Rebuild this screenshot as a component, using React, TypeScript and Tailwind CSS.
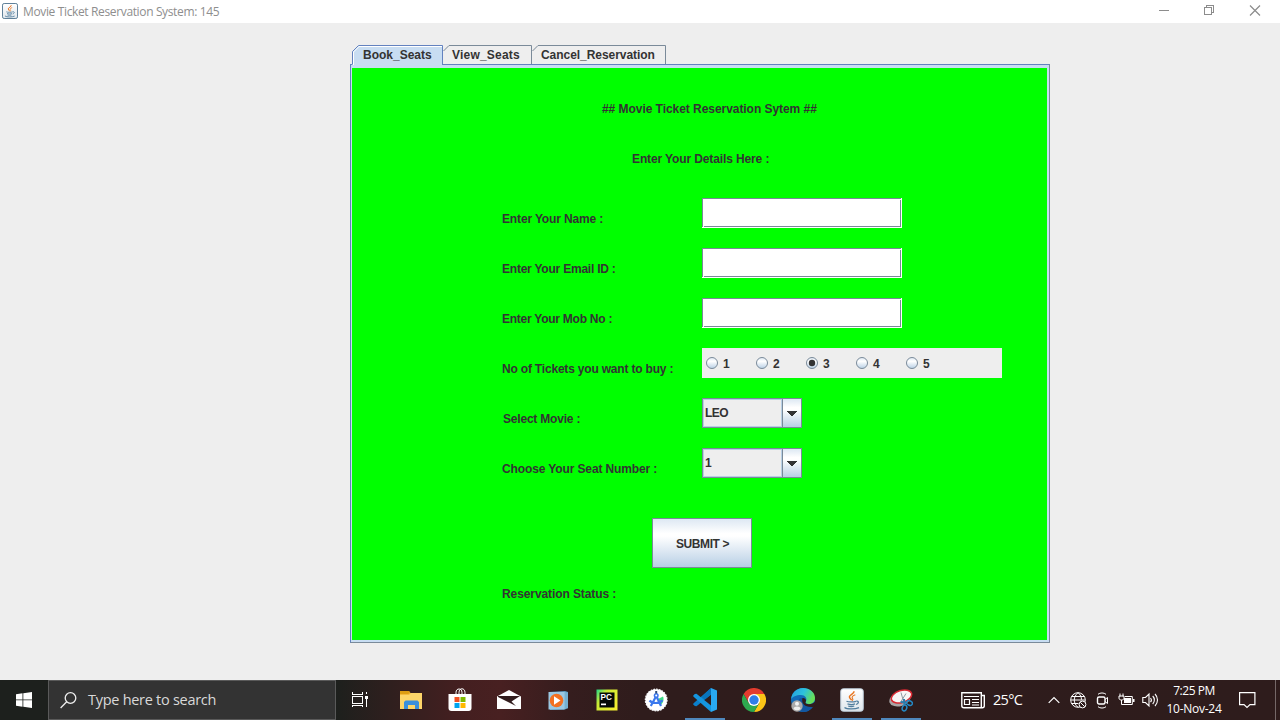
import React from "react";

function JavaIcon({ size }: { size: number }) {
  return (
    <svg width={size} height={size} viewBox="0 0 24 24" fill="none">
      <defs>
        <linearGradient id="javaFace" x1="0" y1="0" x2="0" y2="1">
          <stop offset="0" stopColor="#ffffff" />
          <stop offset="1" stopColor="#dfe6ec" />
        </linearGradient>
      </defs>
      <rect x="0.75" y="0.75" width="22.5" height="22.5" rx="2.5" fill="url(#javaFace)" stroke={size < 20 ? "#5f8099" : "#bccbd8"} strokeWidth={size < 20 ? 1.5 : 1} />
      <path d="M13.8 3.300c.8 2.400-4.400 3.300-4.400 5.500 0 1.700 1.700 2.200 2.200 3.500" stroke="#e8741e" strokeWidth="1.500" />
      <path d="M15.300 6.800c-3 1.200-3.800 2.200-2.800 3.500.7.900.4 1.800-.5 2.500" stroke="#e8741e" strokeWidth="1.100" />
      <path d="M6.500 13.200c1.800 1 7.300.9 9.500.1M7.500 15.800c2.200.8 5.700.8 7.500.1M8.200 18c1.800.6 4.600.5 6 0M16.200 13.200c3-.6 2.900 2.400-.2 3.300M4.500 19.500c2.500 2 11 1.700 14.500.1" stroke="#527e9e" strokeWidth="1.300" />
    </svg>
  );
}

function TitleBar() {
  return (
    <header className="flex h-[23px] w-full items-start bg-white">
      <div className="pl-[2px] pt-[3px]"><JavaIcon size={16} /></div>
      <span className="ml-[5px] mt-[2px] flex-1 whitespace-nowrap font-['Open_Sans','Noto_Sans',sans-serif] text-[12px] leading-[20px] tracking-[-0.36px] text-[#8e8e8e]">Movie Ticket Reservation System: 145</span>
      <svg width="140" height="23" fill="none" stroke="#8c8c8c" shapeRendering="crispEdges">
        <path d="M19 10.500h10" />
        <path d="M66.500 7.500v-2h7v7h-2M64.500 7.500h7v7h-7z" />
        <path d="M110 5.500l10 10M120 5.500l-10 10" shapeRendering="auto" strokeWidth="1.200" />
      </svg>
    </header>
  );
}

function Tab({ label, width, active, text }: { label: string; width: number; active?: boolean; text: string }) {
  const stroke = active ? "#6382bf" : "#7a8a99";
  const bottom = active ? 20 : 19;
  return (
    <div className="relative flex h-5 shrink-0" style={{ width }}>
      <svg className="absolute inset-0" width={width} height="20" fill="none">
        <path d={`M.5 ${bottom}V6.500L6.500.5H${width - 0.5}V${bottom}`} fill={active ? "#c8ddf2" : "#eeeeee"} />
        <path d={active ? `M.5 19V6.500L6.500.5H${width - 0.5}V20` : `M.5 6L6 .5H${width - 0.5}V19`} stroke={stroke} />
        {active ? <path d="M1.500 20V7L7 1.500H90" stroke="#ffffff" /> : null}
      </svg>
      <span className={`relative whitespace-nowrap text-[12px] font-bold leading-[20px] ${text}`}>{label}</span>
    </div>
  );
}

function TextField() {
  return (
    <div className="flex h-[30px] w-[200px] bg-white">
      <svg width="200" height="30" fill="none" stroke="#7a8a99" shapeRendering="crispEdges">
        <path d="M.5 29V.5H199M2 28.500H198.500V2" />
      </svg>
    </div>
  );
}

function Combo({ value, spacing }: { value: string; spacing: string }) {
  return (
    <div className="flex h-[30px] w-[100px] border border-[#7a8a99]">
      <div className="flex w-[79px] border border-[#b8cfe5] bg-[#eeeeee]">
        <span className={`pl-px text-[12px] leading-[26px] ${spacing}`}>{value}</span>
      </div>
      <div className="flex flex-1 items-center justify-center border-l border-[#7a8a99] bg-[linear-gradient(180deg,#dde8f3_0%,#ffffff_30%,#ffffff_38%,#b8cfe5_100%)]">
        <svg width="10" height="5" shapeRendering="crispEdges" className="mt-px">
          <path d="M0 0h10v1H0zM1 1h8v1H1zM2 2h6v1H2zM3 3h4v1H3zM4 4h2v1H4z" fill="#333333" />
        </svg>
      </div>
    </div>
  );
}

function Radio({ value, checked }: { value: string; checked?: boolean }) {
  return (
    <div className="flex h-[30px] w-[50px] items-center pl-1">
      <svg width="13" height="13" viewBox="0 0 13 13" className="mt-px">
        <defs>
          <linearGradient id="radioFace" x1="0" y1="0" x2="0" y2="1">
            <stop offset="0" stopColor="#dde8f3" />
            <stop offset="0.35" stopColor="#ffffff" />
            <stop offset="1" stopColor="#b8cfe5" />
          </linearGradient>
        </defs>
        <circle cx="6" cy="6" r="5.500" fill="url(#radioFace)" stroke="#7a8a99" />
        {checked ? <circle cx="6" cy="6" r="3.200" fill="#333333" /> : null}
      </svg>
      <span className="ml-1 mt-px text-[12px] leading-[20px]">{value}</span>
    </div>
  );
}

function Row({ label, text, children }: { label: string; text: string; children: React.ReactNode }) {
  return (
    <div className="flex h-[50px]">
      <span className={`mt-[11px] w-[200px] shrink-0 whitespace-nowrap text-[12px] leading-[20px] ${text}`}>{label}</span>
      {children}
    </div>
  );
}

function BookingPanel() {
  return (
    <section className="h-[579px] w-[700px] border border-b-[#7a8a99] border-l-[#6382bf] border-r-[#7a8a99] border-t-[#6382bf] bg-[#c8ddf2] pb-[2px] pl-px pr-[2px] pt-[3px]">
      <div className="flex h-[572px] flex-col bg-[#00ff00] pl-[150px] font-bold text-[#333333]">
        <h1 className="ml-[100px] mt-[31px] h-[50px] whitespace-nowrap text-[12px] leading-[20px] tracking-[-0.05px]">## Movie Ticket Reservation Sytem ##</h1>
        <h2 className="ml-[130px] h-[49px] whitespace-nowrap text-[12px] leading-[20px] tracking-[-0.12px]">Enter Your Details Here :</h2>
        <Row label="Enter Your Name :" text="tracking-[-0.15px]"><TextField /></Row>
        <Row label="Enter Your Email ID :" text="tracking-[-0.22px]"><TextField /></Row>
        <Row label="Enter Your Mob No :" text="tracking-[-0.25px]"><TextField /></Row>
        <Row label="No of Tickets you want to buy :" text="tracking-[-0.19px]">
          <div className="flex h-[30px] w-[300px] bg-[#eeeeee]">
            <Radio value="1" />
            <Radio value="2" />
            <Radio value="3" checked />
            <Radio value="4" />
            <Radio value="5" />
          </div>
        </Row>
        <Row label="Select Movie :" text="tracking-[-0.2px] pl-px"><Combo value="LEO" spacing="tracking-[-0.6px]" /></Row>
        <Row label="Choose Your Seat Number :" text="tracking-[-0.12px]"><Combo value="1" spacing="tracking-normal" /></Row>
        <button className="ml-[150px] mt-5 h-[50px] w-[100px] shrink-0 whitespace-nowrap border border-[#7a8a99] bg-[linear-gradient(180deg,#dde8f3_0%,#ffffff_30%,#ffffff_36%,#b8cfe5_100%)] pl-px pt-px text-[12px] font-bold leading-[20px] tracking-[-0.4px]">SUBMIT &gt;</button>
        <span className="mt-4 whitespace-nowrap text-[12px] leading-[20px] tracking-[-0.09px]">Reservation Status :</span>
      </div>
    </section>
  );
}

const ExplorerIcon = () => (
  <svg width="24" height="24">
    <path d="M1 3h9l1.500 2H23v16H1z" fill="#f4b93e" />
    <path d="M1 3h9l1 2-2 1H1z" fill="#dd9d13" />
    <path d="M1 7h9l2-2h11v16H1z" fill="#fdd569" />
    <path d="M5 21v-7l1.500-1.500h12L20 14v7h-4v-4H9v4z" fill="#3a8fdb" />
  </svg>
);

const StoreIcon = () => (
  <svg width="24" height="24" fill="none">
    <path d="M8 7V4.500C8 2 9.500 1 11 1s3 1 3 3.500V7M11 7V4.500C11 2 12.500.8 14 .8s3 1.200 3 3.700V7" stroke="#fff" strokeWidth="1" />
    <path d="M.5 6h23v14c0 2-1 3-3 3h-17c-2 0-3-1-3-3z" fill="#fff" />
    <path d="M6.500 9h5v5h-5z" fill="#f25022" /><path d="M12.500 9h5v5h-5z" fill="#7fba00" />
    <path d="M6.500 15h5v5h-5z" fill="#00a4ef" /><path d="M12.500 15h5v5h-5z" fill="#ffb900" />
  </svg>
);

const MailIcon = () => (
  <svg width="24" height="24">
    <path d="M0 8.500L12 2l12 6.500V21H0z" fill="#fff" />
    <path d="M1 8h22l-8.500 5.500 4.500 4.500L1 9z" fill="#321c1d" />
  </svg>
);

const MediaIcon = () => (
  <svg width="24" height="24">
    <path d="M3 4l16-1 3 1v16l-3 1.500L4 22z" fill="#5b9dc5" />
    <path d="M2.500 4h16v17.500h-16z" fill="#9bc7e2" />
    <path d="M19 4v17M21 4.500v16" stroke="#a8d4ed" strokeWidth=".7" />
    <circle cx="10.500" cy="12.500" r="6.800" fill="#f37021" />
    <path d="M8 8.300v8.400l6.500-4.200z" fill="#fff" />
  </svg>
);

const PycharmIcon = () => (
  <svg width="24" height="24">
    <defs>
      <linearGradient id="pcFace" x1="0" y1="0" x2="1" y2="0.7">
        <stop offset="0" stopColor="#21d789" /><stop offset=".35" stopColor="#c9ea35" /><stop offset="1" stopColor="#f2ee31" />
      </linearGradient>
    </defs>
    <path d="M1.500 1.500h21v21h-21z" fill="url(#pcFace)" />
    <path d="M4.500 4.500h15v15h-15z" fill="#050a07" />
    <path d="M6 15.500h5v1.700H6z" fill="#fff" />
    <text x="5.500" y="12" fontSize="8.200" fontWeight="bold" fontFamily="Liberation Sans" fill="#fff">PC</text>
  </svg>
);

const StudioIcon = () => (
  <svg width="24" height="24" fill="none">
    <circle cx="12.200" cy="12" r="10.800" fill="#fff" stroke="#f6f8fa" strokeWidth="1.300" strokeDasharray="1.800 1" />
    <path d="M14 11l5-2.500c1 2 .7 6-2 8l-3-1z" fill="#3ddc84" />
    <path d="M12 8.500L6.800 18M12.500 8.500L17 18M5.500 12.500c3 3.500 10 3.300 13-.3" stroke="#3b78ed" strokeWidth="2.200" />
    <circle cx="12.200" cy="7.500" r="2.500" fill="#3b78ed" /><circle cx="12.200" cy="7.500" r="1" fill="#fff" />
    <path d="M12.200 3v2.500" stroke="#2c4d7d" strokeWidth="2" />
  </svg>
);

const CodeIcon = () => (
  <svg width="24" height="24">
    <path d="M18 0l6 2.500v19L18 24z" fill="#29a9f3" />
    <path d="M18 0v6.500L3.500 18.300 1.800 18 .3 16.500v-1z" fill="#0b7fcb" />
    <path d="M18 24v-6.500L3.500 5.700 1.800 6 .3 7.500v1z" fill="#1595df" />
    <path d="M18 0L8.600 9l3.300 2.600L18 6.700z" fill="#0874bd" />
  </svg>
);

const ChromeIcon = () => (
  <svg width="24" height="24">
    <path d="M12 6H22.400A12 12 0 0 1 12 24l5.200-9z" fill="#fbc417" />
    <path d="M1.600 6L6.800 15 12 12V6h10.400A12 12 0 0 0 1.600 6z" fill="#e33b2e" />
    <path d="M1.600 6l5.200 9L12 17.500 17.200 15 12 24A12 12 0 0 1 1.600 6z" fill="#2da94f" />
    <circle cx="12" cy="12" r="6" fill="#fff" /><circle cx="12" cy="12" r="4.700" fill="#2e7de9" />
  </svg>
);

const EdgeIcon = () => (
  <svg width="24" height="24">
    <defs>
      <linearGradient id="edgeTop" x1="0" y1="0" x2="1" y2=".4">
        <stop stopColor="#249de0" /><stop offset=".55" stopColor="#2dc1dd" /><stop offset="1" stopColor="#66df59" />
      </linearGradient>
    </defs>
    <circle cx="12" cy="12" r="12" fill="#126bb9" />
    <path d="M.2 11C.7 5 5.300 0 12 0c7 0 12 4.500 12 10 0 4-3 6-6 6-3 0-4-1.300-3-2.500C16.500 10 14 7 10 7 5 7 1.500 9 .2 11z" fill="url(#edgeTop)" />
    <path d="M11 10c3-.5 4.500 1.500 3.800 3.500-1 1.400.2 2.700 3.200 2.700 2.500 0 4.500-1 6-2.800l1 3.600-3 2c-3 1.200-10.500.2-12-4-.5-2 0-4 1-5z" fill="#301c1d" />
    <path d="M7 15c0-4 2-5.500 4.500-5-1.500 5 2 9.500 10 9-2 3-5.500 5-9.500 5-3 0-5-4-5-9z" fill="#1257a2" />
    <circle cx="6" cy="18" r="5.700" fill="#aaa9a9" />
    <circle cx="6" cy="15.800" r="2" fill="#f2f2f2" /><path d="M2.500 21c0-3.300 7-3.300 7 0-2 1.800-5 1.800-7 0z" fill="#eee" />
  </svg>
);

const SnipIcon = () => (
  <svg width="24" height="24" fill="none">
    <ellipse cx="11" cy="11" rx="11" ry="7" transform="rotate(-18 11 11)" fill="#a9a5a6" />
    <ellipse cx="12.500" cy="8.500" rx="10.500" ry="6" transform="rotate(-18 12.500 8.500)" fill="#f8f6f6" stroke="#d82932" strokeWidth="1.500" />
    <path d="M12 4.500l2.500 9M17 5.500l-5 8" stroke="#8d9ba2" strokeWidth="1" />
    <path d="M11.500 14l6.500.5M15 11l.5 6" stroke="#2b7dae" strokeWidth="2" />
    <ellipse cx="20.500" cy="15" rx="3" ry="2.200" transform="rotate(25 20.500 15)" stroke="#2489c5" strokeWidth="1.500" />
    <ellipse cx="15.500" cy="20" rx="2.200" ry="3" transform="rotate(20 15.500 20)" stroke="#2489c5" strokeWidth="1.500" />
  </svg>
);

function TaskButton({ running, children }: { running?: boolean; children: React.ReactNode }) {
  return (
    <div className="flex h-10 w-[49px] flex-col items-center pt-2">
      {children}
      {running ? <div className="mt-[6px] h-[2px] w-10 bg-[#4f88bd]" /> : null}
    </div>
  );
}

function Taskbar() {
  return (
    <footer className="flex h-10 w-full bg-[linear-gradient(90deg,#1d201d_0px,#1d201d_335px,#2f1f1e_390px,#431f20_455px,#482021_500px,#351d1e_570px,#2f1c1c_640px,#2e1c1c_1280px)] font-['Open_Sans','Noto_Sans',sans-serif] text-white">
      <div className="flex w-12 items-center justify-center">
        <svg width="16" height="16" fill="#fff"><path d="M0 2.200L6.500 1.300v6.200H0zM7.300 1.200L16 0v7.500H7.300zM0 8.300h6.500v6.400L0 13.800zM7.300 8.300H16V16l-8.700-1.200z" /></svg>
      </div>
      <div className="flex w-[288px] items-center border border-[#5a5a5a] bg-[#333333]">
        <svg className="ml-[11px]" width="17" height="17" fill="none" stroke="#eeeeee" strokeWidth="1.300"><circle cx="10.500" cy="6" r="5.300" /><path d="M6.700 9.800L.6 16" /></svg>
        <span className="ml-[11px] whitespace-nowrap text-[14.5px] leading-[20px] tracking-[-0.28px] text-[#d9d9d9]">Type here to search</span>
      </div>
      <div className="flex w-[50px] items-center pl-4">
        <svg width="16" height="16" fill="none" stroke="#fff" shapeRendering="crispEdges"><path d="M.5 0v2.500h10V0M.5 4.500h10v7H.5zM.5 15v-1.500h10V15M14.500 0v2M14.500 7v8" /><path d="M13 4h3v3h-3z" fill="#fff" stroke="none" /></svg>
      </div>
      <TaskButton><ExplorerIcon /></TaskButton>
      <TaskButton><StoreIcon /></TaskButton>
      <TaskButton><MailIcon /></TaskButton>
      <TaskButton><MediaIcon /></TaskButton>
      <TaskButton><PycharmIcon /></TaskButton>
      <TaskButton><StudioIcon /></TaskButton>
      <TaskButton running><CodeIcon /></TaskButton>
      <TaskButton><ChromeIcon /></TaskButton>
      <TaskButton><EdgeIcon /></TaskButton>
      <TaskButton running><JavaIcon size={24} /></TaskButton>
      <TaskButton running><SnipIcon /></TaskButton>
      <div className="flex flex-1 items-center pl-9">
        <svg width="24" height="17" fill="none" stroke="#fff"><path d="M.8.8h19.500v15H3c-1.500 0-2.200-.8-2.200-2zM20.300 3.500h3v10.300c0 1.200-.8 2-2 2h-1.500" strokeWidth="1.400" /><path d="M3 4.500h15M11 7.500h7M11 10.500h7M11 13h7M3.500 7.500h5v5h-5z" strokeWidth="1.200" /></svg>
        <span className="-mt-px ml-2 w-[55px] whitespace-nowrap text-[14.5px] leading-[20px] tracking-[-0.7px]">25°C</span>
        <svg width="12" height="8" fill="none" stroke="#fff" strokeWidth="1.200"><path d="M.7 6.800L6 1.500l5.300 5.300" /></svg>
        <svg className="ml-[10px]" width="17" height="17" fill="none" stroke="#fff"><circle cx="8" cy="8" r="7.300" /><path d="M8 .7C3 5 3 11 8 15.300M8 .7c2.500 2 3.500 4.500 3.500 7M1.500 4.500h13M.8 8h14M1.500 11.500h7" /><circle cx="12.500" cy="12.500" r="3.400" fill="#2e1c1c" /><path d="M10.300 10.300l4.400 4.400" /></svg>
        <svg className="ml-[9px]" width="14" height="17" fill="none" stroke="#fff"><rect x="1.500" y="5" width="7.500" height="7" rx="1.500" strokeWidth="1.400" /><path d="M9 7.500l2.500-2v6L9 9.500M2 2.300c2-1.800 6-1.800 8 0M2 14.700c2 1.800 6 1.800 8 0" /></svg>
        <svg className="ml-[8px]" width="17" height="16" fill="none" stroke="#fff"><path d="M2 1.500v3M5 1.500v3M1 4h5v2C6 7.500 5 8 3.500 8S1 7.500 1 6zM3.500 8v4.500h10.800v-8H7" /><path d="M6 6h7v5H6zM15 7h1.500v3H15z" fill="#fff" stroke="none" /></svg>
        <svg className="ml-[7px]" width="18" height="16" fill="none" stroke="#fff"><path d="M.8 5.500h2.700L7 2v12l-3.500-3.500H.8zM8.500 6c1 1.200 1 3 0 4M10.700 4c2.200 2.200 2.200 5.800 0 8M13 2c3.300 3.300 3.300 8.700 0 12" strokeWidth="1.100" /></svg>
        <div className="ml-[4px] flex w-[60px] flex-col items-center whitespace-nowrap pb-px text-[12px] leading-[18px]">
          <span className="tracking-[-0.45px]">7:25 PM</span>
          <span className="tracking-[-0.25px]">10-Nov-24</span>
        </div>
        <svg className="ml-[15px]" width="17" height="17" fill="none" stroke="#fff" strokeWidth="1.200"><path d="M.6.6h15.300v12H11L8 15.500l-3-2.900H.6z" /></svg>
      </div>
      <div className="w-[5px] border-l border-[#756868]" />
    </footer>
  );
}

export default function App() {
  return (
    <div className="flex h-[720px] w-[1280px] flex-col overflow-hidden bg-[#eeeeee] font-['Liberation_Sans',Arial,sans-serif] text-[#333333]">
      <TitleBar />
      <main className="flex h-[657px] flex-col items-start pl-[350px] pt-[22px]">
        <nav className="z-10 -mb-px flex h-5 w-[700px] pl-[2px]">
          <Tab label="Book_Seats" width={91} active text="pl-[11px]" />
          <Tab label="View_Seats" width={89} text="pl-[9px] tracking-[0.2px]" />
          <Tab label="Cancel_Reservation" width={134} text="pl-[9px] tracking-[-0.05px]" />
        </nav>
        <BookingPanel />
      </main>
      <Taskbar />
    </div>
  );
}
